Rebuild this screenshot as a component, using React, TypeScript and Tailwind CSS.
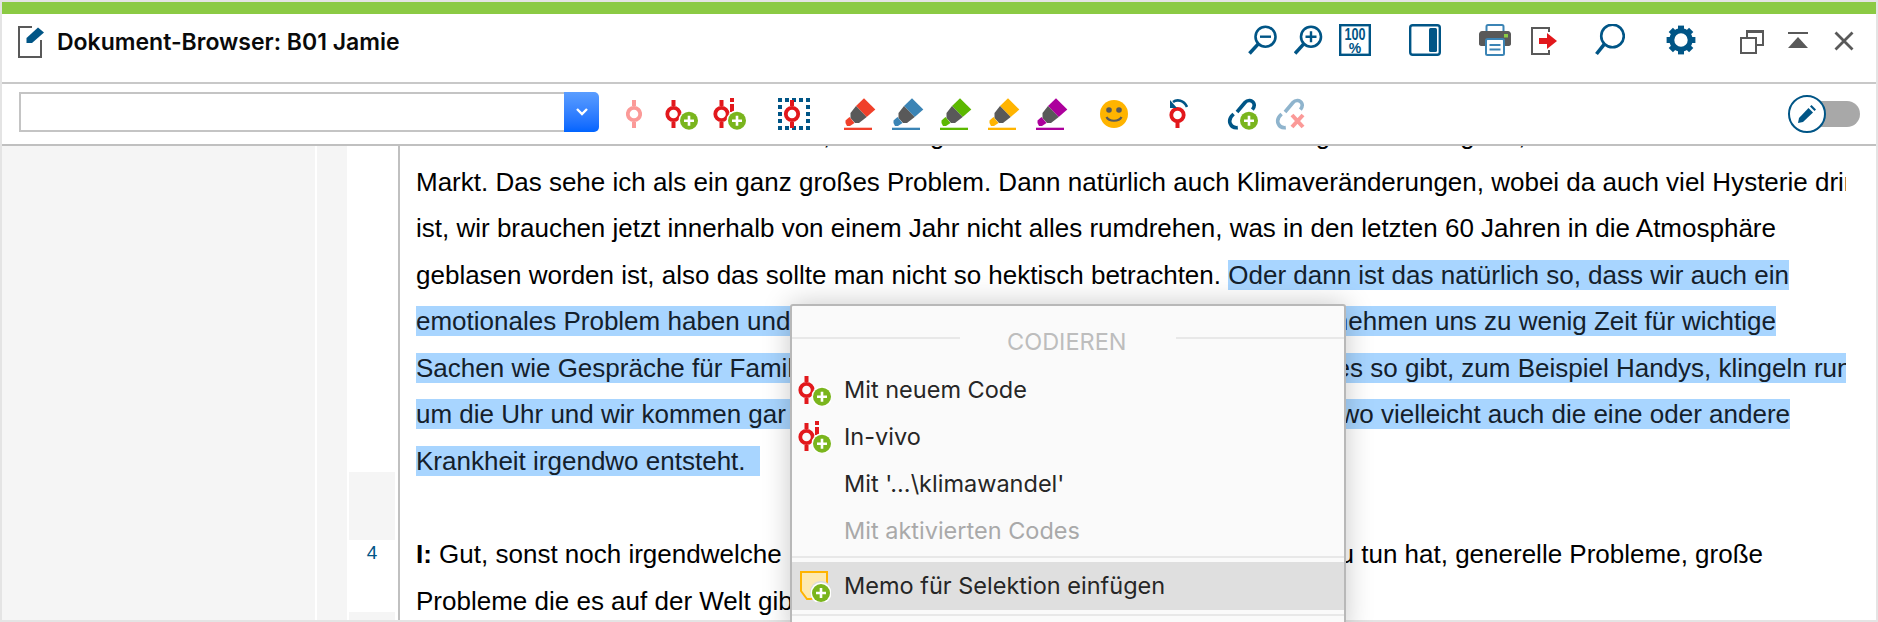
const BLUE = "#005586";
const RED = "#e2181c";

function Badge({ cx, cy = 22.7 }: { cx: number; cy?: number }) {
  return (
    <g>
      <circle cx={cx} cy={cy} r={10.5} fill="#fff" />
      <circle cx={cx} cy={cy} r={9} fill="#7ab51d" />
      <path d={`M${cx - 5} ${cy}H${cx + 5}M${cx} ${cy - 5}V${cy + 5}`} stroke="#fff" strokeWidth={2.6} />
    </g>
  );
}

function Pin({ cx, color = RED, cy = 16 }: { cx: number; color?: string; cy?: number }) {
  return (
    <g>
      <circle cx={cx} cy={cy} r={6.2} fill="none" stroke={color} strokeWidth={3.8} />
      <rect x={cx - 2} y={cy - 14} width={4} height={6} fill={color} />
      <rect x={cx - 2} y={cy + 8} width={4} height={6} fill={color} />
    </g>
  );
}

function CodePlus({ className = "" }: { className?: string }) {
  return (
    <svg width="33" height="32" viewBox="0 0 33 32" className={className}>
      <Pin cx={8.5} />
      <Badge cx={24} />
    </svg>
  );
}

function InVivoPlus({ className = "" }: { className?: string }) {
  return (
    <svg width="33" height="32" viewBox="0 0 33 32" className={className}>
      <Pin cx={8.5} />
      <rect x={17} y={0} width={4} height={4} fill={RED} />
      <rect x={17} y={6} width={4} height={8} fill={RED} />
      <Badge cx={24} />
    </svg>
  );
}

function Marker({ color, className = "" }: { color: string; className?: string }) {
  return (
    <svg width="28" height="32" viewBox="0 0 28 32" className={`overflow-visible ${className}`}>
      <path d="M20 0.3L31.3 11.5L22.7 19L12 8Z" fill={color} />
      <path d="M12 8L22.7 19L15 25H11L6.5 20V15Z" fill="#595959" />
      <path d="M5.5 19L10.5 25L6 28H3L1.5 25V22.6Z" fill={color} />
      <rect x="0" y="29.7" width="28" height="2.3" fill={color} />
    </svg>
  );
}

function LinkGlyph({ color }: { color: string }) {
  return (
    <path
      d="M10 14L18 4.5C20.5 1.5 25 2 26.6 4.8C27.8 7 27 9.6 25.4 11.6M6.6 16C3.2 19 2 22.5 3.2 25.5C4.4 28.5 7.5 30 10.8 29.6"
      fill="none"
      stroke={color}
      strokeWidth={3.6}
    />
  );
}

function Lens({ cx, cy, r, x2, y2, inner }: { cx: number; cy: number; r: number; x2: number; y2: number; inner?: string }) {
  return (
    <g fill="none" stroke={BLUE}>
      <circle cx={cx} cy={cy} r={r} strokeWidth={2.6} />
      <path d={`M${cx - r * 0.72} ${cy + r * 0.72}L${x2} ${y2}`} strokeWidth={3.6} />
      {inner && <path d={inner} strokeWidth={2.4} />}
    </g>
  );
}

function Gear() {
  const teeth = [0, 45, 90, 135, 180, 225, 270, 315];
  return (
    <svg width="30" height="32" viewBox="0 0 30 32" className="ml-[41px]">
      <circle cx="15" cy="16" r="9.2" fill="none" stroke={BLUE} strokeWidth="5" />
      {teeth.map((a) => (
        <rect key={a} x="12" y="1.6" width="6" height="5" fill={BLUE} transform={`rotate(${a} 15 16)`} />
      ))}
    </svg>
  );
}

function Line({ children }: { children: React.ReactNode }) {
  return <div className="h-[46.55px] leading-[46.55px] whitespace-pre">{children}</div>;
}

function Hl({ children }: { children: React.ReactNode }) {
  return <span className="inline-block h-[30px] leading-[30px] bg-[#a8d5ff] text-[#14202b]">{children}</span>;
}

function MenuRow({ icon, children, muted }: { icon?: React.ReactNode; children: React.ReactNode; muted?: boolean }) {
  return (
    <div className={`flex items-center h-[47px] ${muted ? "text-[#a9a9a9]" : "text-[#262626]"}`}>
      <div className="ml-[6px] mr-[13px] w-[33px] h-[32px] shrink-0">{icon}</div>
      {children}
    </div>
  );
}

export default function App() {
  return (
    <div className="relative w-[1878px] h-[622px] overflow-hidden bg-[#e4e4e4] p-[2px] font-['Liberation_Sans',sans-serif]">
      <div className="flex flex-col h-full bg-white">
        <div className="h-[12px] bg-[#8bca44]" />

        {/* Title bar */}
        <div className="flex items-start h-[70px] pt-[10px] border-b-2 border-[#c8c8c8] shrink-0">
          <svg width="24" height="32" viewBox="0 0 24 32" className="ml-[16px] mt-[2px] overflow-visible">
            <path d="M14 1H1V31H23V14" fill="none" stroke="#595959" strokeWidth="2" />
            <path d="M8.5 12L20 1.5L26 6.5L14 17H8.5Z" fill={BLUE} />
          </svg>
          <span className="ml-[15px] mt-[3px] font-['Inter',sans-serif] font-semibold text-[23px] leading-[30px] text-[#0a0a0a]">
            Dokument-Browser: B01 Jamie
          </span>

          <svg width="30" height="32" viewBox="0 0 30 32" className="ml-auto">
            <Lens cx={17.5} cy={12.7} r={10} x2={1.5} y2={29.5} inner="M12 12.7H23" />
          </svg>
          <svg width="30" height="32" viewBox="0 0 30 32" className="ml-[16px]">
            <Lens cx={17} cy={12.7} r={10} x2={1} y2={29.5} inner="M11.5 12.7H22.5M17 7.2V18.2" />
          </svg>
          <svg width="32" height="32" viewBox="0 0 32 32" className="ml-[15px]">
            <rect x="1.2" y="1.2" width="29.6" height="29.6" fill="none" stroke={BLUE} strokeWidth="2.4" />
            <text x="16" y="16" textAnchor="middle" fontFamily="Liberation Sans" fontWeight="700" fontSize="16" fill={BLUE} textLength="21" lengthAdjust="spacingAndGlyphs">
              100
            </text>
            <text x="16" y="29" textAnchor="middle" fontFamily="Liberation Sans" fontWeight="700" fontSize="14" fill={BLUE}>
              %
            </text>
          </svg>
          <svg width="32" height="32" viewBox="0 0 32 32" className="ml-[38px]">
            <rect x="1.2" y="1.2" width="29.6" height="29.6" rx="2.5" fill="none" stroke={BLUE} strokeWidth="2.4" />
            <rect x="20" y="4" width="8" height="24" rx="1.5" fill={BLUE} />
          </svg>
          <svg width="32" height="32" viewBox="0 0 32 32" className="ml-[38px]">
            <rect x="7.5" y="1" width="17" height="9" rx="1.5" fill="#fff" stroke="#3b84b5" strokeWidth="2" />
            <path d="M3 7H29C30.5 7 32 8.5 32 10V20C32 21.5 30.5 22 29 22H3C1.5 22 0 21.5 0 20V10C0 8.5 1.5 7 3 7Z" fill="#595959" />
            <rect x="25" y="10" width="4" height="3.5" fill="#8bca44" />
            <rect x="7" y="15" width="18" height="16" rx="1.5" fill="#fff" stroke="#3b84b5" strokeWidth="2" />
            <path d="M10.5 21H21.5M10.5 25.5H21.5" stroke="#3b84b5" strokeWidth="2" />
          </svg>
          <svg width="26" height="30" viewBox="0 0 26 30" className="ml-[20px] mt-[2px]">
            <path d="M18 6V2H1V28H18V24" fill="none" stroke="#595959" strokeWidth="2" />
            <path d="M8 12H16V7L26 15L16 23V18H8Z" fill={RED} />
          </svg>
          <svg width="30" height="32" viewBox="0 0 30 32" className="ml-[38px]">
            <Lens cx={17.5} cy={12} r={11.3} x2={1.5} y2={30} />
          </svg>
          <Gear />
          <svg width="24" height="24" viewBox="0 0 24 24" className="ml-[44px] mt-[6px]">
            <path d="M7 7V1H23V15H16" fill="none" stroke="#595959" strokeWidth="2" />
            <rect x="7" y="0" width="17" height="3" fill="#595959" />
            <rect x="1" y="8" width="15" height="15" fill="none" stroke="#595959" strokeWidth="2" />
          </svg>
          <svg width="20" height="16" viewBox="0 0 20 16" className="ml-[24px] mt-[8px]">
            <rect x="0" y="0" width="20" height="2" fill="#595959" />
            <path d="M10 5L20 16H0Z" fill="#595959" />
          </svg>
          <svg width="20" height="20" viewBox="0 0 20 20" className="ml-[26px] mr-[22px] mt-[7px]">
            <path d="M1.5 1.5L18.5 18.5M18.5 1.5L1.5 18.5" stroke="#595959" strokeWidth="2.8" />
          </svg>
        </div>

        {/* Toolbar */}
        <div className="flex items-center h-[62px] border-b-2 border-[#c0c0c0] shrink-0">
          <div className="flex ml-[17px] -mt-[4px] w-[580px] h-[40px]">
            <div className="flex-1 bg-white border-2 border-r-0 border-[#c4c4c4]" />
            <div className="w-[35px] h-[40px] rounded-r-[5px] bg-gradient-to-b from-[#5a9dff] to-[#0064ff] flex items-center justify-center">
              <svg width="14" height="10" viewBox="0 0 14 10">
                <path d="M2 2L7 7L12 2" fill="none" stroke="#fff" strokeWidth="2.4" />
              </svg>
            </div>
          </div>
          <svg width="16" height="32" viewBox="0 0 16 32" className="ml-[27px]">
            <Pin cx={8} color="#fb9a98" />
          </svg>
          <CodePlus className="ml-[23px]" />
          <InVivoPlus className="ml-[15px]" />
          <svg width="32" height="32" viewBox="0 0 32 32" className="ml-[32px]">
            <rect x="2" y="2" width="28" height="28" fill="none" stroke={BLUE} strokeWidth="4" strokeDasharray="4 3" strokeDashoffset="2" />
            <Pin cx={14} />
          </svg>
          <Marker color="#f0402a" className="ml-[34px]" />
          <Marker color="#3b84b5" className="ml-[20px]" />
          <Marker color="#5cb800" className="ml-[20px]" />
          <Marker color="#ffb400" className="ml-[20px]" />
          <Marker color="#ac009c" className="ml-[20px]" />
          <svg width="28" height="32" viewBox="0 0 28 32" className="ml-[36px]">
            <circle cx="14" cy="16" r="14" fill="#ffb400" />
            <circle cx="9" cy="12" r="2.8" fill="#595959" />
            <circle cx="19" cy="12" r="2.8" fill="#595959" />
            <path d="M6.5 19C9 24 19 24 21.5 19" fill="none" stroke="#595959" strokeWidth="2.2" />
          </svg>
          <svg width="20" height="32" viewBox="0 0 20 32" className="ml-[40px]">
            <circle cx="9.5" cy="17" r="6.2" fill="none" stroke={RED} strokeWidth="3.8" />
            <rect x="7.5" y="24" width="4" height="6" fill={RED} />
            <path d="M2 2V10H9Z" fill={BLUE} />
            <path d="M5 4C9 1 16 2 19 9" fill="none" stroke={BLUE} strokeWidth="2.6" />
          </svg>
          <svg width="31" height="32" viewBox="0 0 31 32" className="ml-[39px]">
            <LinkGlyph color={BLUE} />
            <Badge cx={22} />
          </svg>
          <svg width="30" height="32" viewBox="0 0 30 32" className="ml-[17px]">
            <LinkGlyph color="#8fb4cd" />
            <path d="M17 17L28 29M28 17L17 29" stroke="#fb9a98" strokeWidth="4" />
          </svg>

          <div className="relative ml-auto mr-[16px] w-[72px] h-[38px] flex items-center">
            <div className="ml-[20px] w-[52px] h-[26px] rounded-r-full bg-[#a8a8a8]" />
            <div className="absolute left-0 top-0 w-[38px] h-[38px] rounded-full bg-white border-2 border-[#005586] flex items-center justify-center">
              <svg width="22" height="22" viewBox="0 0 22 22">
                <path d="M3 15L12.5 5L17 9.5L7 19L2 20Z" fill={BLUE} />
                <path d="M14 3.5L15.5 2L20 6.5L18.5 8Z" fill={BLUE} />
              </svg>
            </div>
          </div>
        </div>

        {/* Document body */}
        <div className="flex flex-1 min-h-0 overflow-hidden">
          <div className="w-[313px] bg-[#f5f5f5]" />
          <div className="ml-[2px] w-[30px] bg-[#f5f5f5]" />
          <div className="ml-[2px] w-[46px] flex flex-col">
            <div className="h-[326px]" />
            <div className="h-[68px] bg-[#f5f5f5]" />
            <div className="h-[72px] text-center text-[19px] leading-[26px] text-[#005586]">4</div>
            <div className="flex-1 bg-[#f5f5f5]" />
          </div>
          <div className="ml-[3px] w-[2px] bg-[#c0c0c0]" />
          <div className="ml-[16px] w-[1430px] overflow-hidden text-[26px] text-black">
            <div className="-mt-[33.85px]">
              <Line>Es ist alles in einem Trend der Welt, und die ganze Umwelt hat sich verändert ganz Wirkung hat, und das ist nicht so einfach am</Line>
              <Line>Markt. Das sehe ich als ein ganz großes Problem. Dann natürlich auch Klimaveränderungen, wobei da auch viel Hysterie drin</Line>
              <Line>ist, wir brauchen jetzt innerhalb von einem Jahr nicht alles rumdrehen, was in den letzten 60 Jahren in die Atmosphäre</Line>
              <Line>
                geblasen worden ist, also das sollte man nicht so hektisch betrachten. <Hl>Oder dann ist das natürlich so, dass wir auch ein</Hl>
              </Line>
              <Line>
                <Hl>
                  <span className="flex justify-between w-[1360px]">
                    <span>emotionales Problem haben und gar nicht mehr richtig</span>
                    <span>zur Ruhe, wir nehmen uns zu wenig Zeit für wichtige</span>
                  </span>
                </Hl>
              </Line>
              <Line>
                <Hl>
                  <span className="flex justify-between w-[1450px]">
                    <span>Sachen wie Gespräche für Familie und Freunde,</span>
                    <span>weil es all die Medien, die es so gibt, zum Beispiel Handys, klingeln rund</span>
                  </span>
                </Hl>
              </Line>
              <Line>
                <Hl>
                  <span className="flex justify-between w-[1374px]">
                    <span>um die Uhr und wir kommen gar nicht mehr zum</span>
                    <span>Abschalten und das ist so, wo vielleicht auch die eine oder andere</span>
                  </span>
                </Hl>
              </Line>
              <Line>
                <Hl>{"Krankheit irgendwo entsteht.  "}</Hl>
              </Line>
              <Line> </Line>
              <div className="flex justify-between w-[1347px] h-[46.55px] leading-[46.55px] whitespace-pre">
                <span>
                  <b>I:</b> Gut, sonst noch irgendwelche Dinge, die jetzt
                </span>
                <span>mit dem Thema nichts zu tun hat, generelle Probleme, große</span>
              </div>
              <Line>Probleme die es auf der Welt gibt, die Sie noch nennen möchten?</Line>
            </div>
          </div>
        </div>
      </div>

      {/* Context menu */}
      <div className="absolute left-[790px] top-[304px] w-[556px] h-[330px] bg-[#fafafa] border-2 border-[#b8b8b8] rounded-t-[3px] shadow-[0_0_28px_rgba(0,0,0,0.22)] font-['Inter',sans-serif] text-[23.5px]">
        <div className="flex items-center h-[48px] mt-[12px] text-[#bdbdbd]">
          <div className="w-[168px] h-[2px] bg-[#e8e8e8] -mt-[8px]" />
          <span className="ml-[47px] w-[121px] whitespace-nowrap">CODIEREN</span>
          <div className="ml-[48px] flex-1 h-[2px] bg-[#e8e8e8] -mt-[8px]" />
        </div>
        <MenuRow icon={<CodePlus />}>Mit neuem Code</MenuRow>
        <MenuRow icon={<InVivoPlus />}>In-vivo</MenuRow>
        <MenuRow>Mit '...\klimawandel'</MenuRow>
        <MenuRow muted>Mit aktivierten Codes</MenuRow>
        <div className="h-[2px] mt-[2px] bg-[#e8e8e8]" />
        <div className="flex items-center h-[48px] mt-[4px] bg-[#dfdfdf] text-[#262626]">
          <svg width="33" height="32" viewBox="0 0 33 32" className="ml-[6px] mr-[13px] shrink-0">
            <path d="M3 2H29V22L13 29H9L3 21Z" fill="#fde9b0" stroke="#ffb400" strokeWidth="2" />
            <circle cx="23" cy="22" r="11" fill="#dcdcdc" />
            <Badge cx={23} cy={23} />
          </svg>
          Memo für Selektion einfügen
        </div>
        <div className="h-[2px] mt-[4px] bg-[#e8e8e8]" />
      </div>
    </div>
  );
}
